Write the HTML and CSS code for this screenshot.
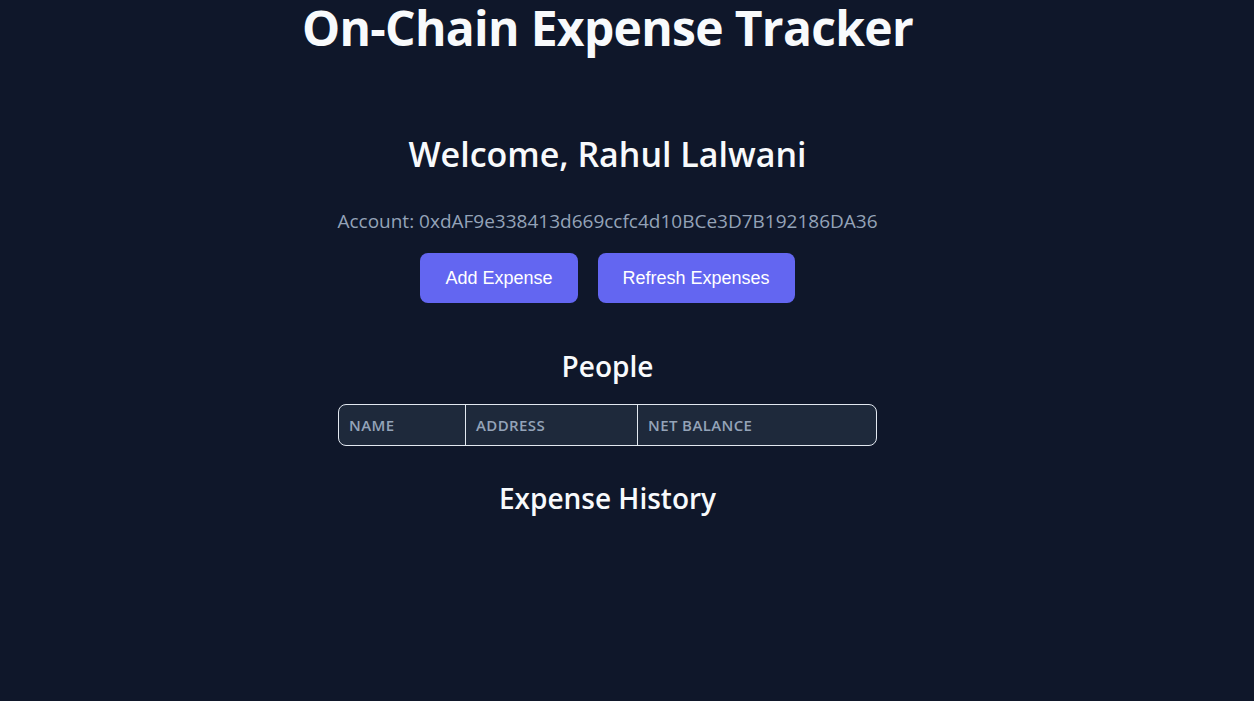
FILE: index.html
```html
<!DOCTYPE html>
<html lang="en">
<head>
<meta charset="utf-8">
<title>On-Chain Expense Tracker</title>
<link rel="stylesheet" href="styles.css">
</head>
<body>
<div class="page">
  <h1 class="title">On-Chain Expense Tracker</h1>
  <h2 class="welcome">Welcome, Rahul Lalwani</h2>
  <p class="account">Account: 0xdAF9e338413d669ccfc4d10BCe3D7B192186DA36</p>
  <div class="actions">
    <button class="btn">Add Expense</button>
    <button class="btn">Refresh Expenses</button>
  </div>
  <h3 class="section">People</h3>
  <table class="people">
    <thead>
      <tr>
        <th class="col-name">Name</th>
        <th class="col-address">Address</th>
        <th class="col-balance">Net Balance</th>
      </tr>
    </thead>
    <tbody></tbody>
  </table>
  <h3 class="section history">Expense History</h3>
</div>
</body>
</html>
```
FILE: styles.css
```css
html, body {
  margin: 0;
  padding: 0;
  background: #0f172a;
}
body {
  font-family: "Open Sans", "Noto Sans", sans-serif;
  color: #f8fafc;
  height: 701px;
  overflow: hidden;
}
.page {
  width: 1215px;
  display: flex;
  flex-direction: column;
  align-items: center;
  text-align: center;
}
.title {
  margin: 0;
  font-size: 48px;
  line-height: 56px;
  font-weight: 700;
  letter-spacing: -0.7px;
}
.welcome {
  margin: 78px 0 0;
  font-size: 34px;
  line-height: 40px;
  font-weight: 600;
}
.account {
  margin: 35px 0 0;
  font-size: 19px;
  line-height: 24px;
  color: #94a3b8;
}
.actions {
  margin-top: 20px;
  display: flex;
  gap: 20px;
}
.btn {
  font-family: "Liberation Sans", Arial, sans-serif;
  font-size: 18px;
  height: 50px;
  padding: 0 25px;
  white-space: nowrap;
  border: none;
  border-radius: 8px;
  background: #6366f1;
  color: #ffffff;
}
.section {
  margin: 46px 0 0;
  font-size: 28px;
  line-height: 34px;
  font-weight: 600;
}
.history {
  margin-top: 35px;
}
.people {
  margin-top: 21px;
  width: 539px;
  border-collapse: separate;
  border-spacing: 0;
  border: 1px solid #e2e8f0;
  border-radius: 8px;
  overflow: hidden;
  background: #1e293b;
}
.people th {
  height: 40px;
  padding: 0 10px;
  text-align: left;
  font-size: 15px;
  font-weight: 600;
  letter-spacing: 0.4px;
  text-transform: uppercase;
  color: #94a3b8;
  border-left: 1px solid #e2e8f0;
}
.people th:first-child { border-left: none; }
.col-name { width: 106px; }
.col-address { width: 151px; }
```
